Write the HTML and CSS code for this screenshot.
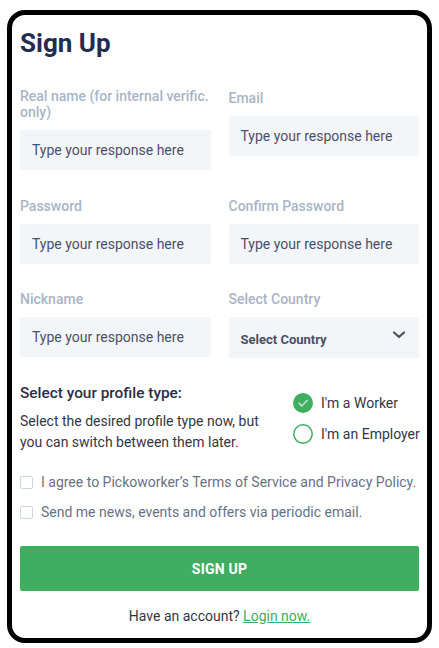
FILE: index.html
```html
<!DOCTYPE html>
<html lang="en">
<head>
<meta charset="utf-8">
<title>Sign Up</title>
<link rel="stylesheet" href="styles.css">
</head>
<body>
<main class="card">
  <h1 class="title">Sign Up</h1>
  <div class="grid">
    <div class="field">
      <label class="label" for="f-name">Real name (for internal verific. only)</label>
      <input class="input" id="f-name" type="text" placeholder="Type your response here">
    </div>
    <div class="field field-offset">
      <label class="label" for="f-email">Email</label>
      <input class="input" id="f-email" type="text" placeholder="Type your response here">
    </div>
    <div class="field">
      <label class="label" for="f-pass">Password</label>
      <input class="input" id="f-pass" type="text" placeholder="Type your response here">
    </div>
    <div class="field">
      <label class="label" for="f-pass2">Confirm Password</label>
      <input class="input" id="f-pass2" type="text" placeholder="Type your response here">
    </div>
    <div class="field">
      <label class="label" for="f-nick">Nickname</label>
      <input class="input" id="f-nick" type="text" placeholder="Type your response here">
    </div>
    <div class="field">
      <label class="label">Select Country</label>
      <div class="select">
        <span class="select-text">Select Country</span>
        <svg class="chevron" width="12" height="8" viewBox="0 0 12 8"><polyline points="1,1.5 6,6 11,1.5" fill="none" stroke="#4b5066" stroke-width="2.2" stroke-linecap="round" stroke-linejoin="round"/></svg>
      </div>
    </div>
  </div>

  <section class="profile">
    <div class="profile-text">
      <h2 class="profile-title">Select your profile type:</h2>
      <p class="profile-desc">Select the desired profile type now, but you can switch between them later.</p>
    </div>
    <div class="radios">
      <div class="radio">
        <svg class="radio-icon" width="20" height="20" viewBox="0 0 20 20"><circle cx="10" cy="10" r="10" fill="#3fae60"/><polyline points="6,10.2 8.8,13 14,7.6" fill="none" stroke="#ffffff" stroke-opacity="0.6" stroke-width="1.8" stroke-linecap="round" stroke-linejoin="round"/></svg>
        <span>I'm a Worker</span>
      </div>
      <div class="radio">
        <svg class="radio-icon" width="20" height="20" viewBox="0 0 20 20"><circle cx="10" cy="10" r="9.2" fill="#fff" stroke="#3fae60" stroke-width="1.5"/></svg>
        <span>I'm an Employer</span>
      </div>
    </div>
  </section>

  <div class="checks">
    <div class="check"><span class="box"></span><span>I agree to Pickoworker’s Terms of Service and Privacy Policy.</span></div>
    <div class="check"><span class="box"></span><span>Send me news, events and offers via periodic email.</span></div>
  </div>

  <button class="btn" type="button">SIGN UP</button>
  <p class="footer">Have an account? <a class="link" href="#">Login now.</a></p>
</main>
</body>
</html>
```
FILE: styles.css
```css
* { box-sizing: border-box; }
body {
  margin: 0;
  background: #fff;
  font-family: Roboto, "Liberation Sans", sans-serif;
}
.card {
  width: 425px;
  height: 633px;
  margin: 10px 0 0 7px;
  border: 5px solid #000;
  border-radius: 18px;
  padding: 13px 8px 0 8px;
  background: #fff;
}
.title {
  margin: 0 0 30px;
  font-size: 26px;
  line-height: 30px;
  font-weight: 700;
  color: #232d52;
}
.grid {
  display: grid;
  grid-template-columns: minmax(0, 1fr) minmax(0, 1fr);
  column-gap: 18px;
  row-gap: 27.5px;
  align-items: start;
}
.field { display: flex; flex-direction: column; min-width: 0; }
.field-offset { padding-top: 2px; }
.label {
  font-size: 14px;
  line-height: 16px;
  font-weight: 500;
  color: #a9b5c7;
  margin-bottom: 10px;
}
.input {
  width: 100%;
  min-width: 0;
  height: 40px;
  border: none;
  border-radius: 2px;
  background: #f3f6f9;
  padding: 0 12px;
  font-family: Roboto, "Liberation Sans", sans-serif;
  font-size: 14px;
  color: #4b5068;
  outline: none;
}
.input::placeholder { color: #4b5068; opacity: 1; }
.select {
  height: 41px;
  border-radius: 2px;
  background: #f3f6f9;
  padding: 0 14px 0 12px;
  display: flex;
  align-items: center;
  justify-content: space-between;
}
.select-text {
  font-size: 13px;
  font-weight: 700;
  color: #4b5066;
  padding-top: 3px;
}
.chevron { margin-bottom: 6px; }
.profile {
  margin-top: 25px;
  display: flex;
  align-items: flex-start;
  justify-content: space-between;
}
.profile-text { max-width: 262px; }
.profile-title {
  margin: 0;
  font-size: 15.4px;
  line-height: 20px;
  font-weight: 500;
  color: #2b2e45;
}
.profile-desc {
  margin: 8px 0 0;
  font-size: 14px;
  line-height: 21px;
  color: #333740;
}
.radios {
  width: 126px;
  margin-top: 10px;
  display: flex;
  flex-direction: column;
  gap: 11px;
}
.radio {
  display: flex;
  align-items: center;
  gap: 8px;
  height: 20px;
  font-size: 14px;
  color: #333740;
  white-space: nowrap;
}
.radio-icon { flex: none; }
.checks {
  margin-top: 19px;
  display: flex;
  flex-direction: column;
  gap: 10px;
}
.check {
  display: flex;
  align-items: center;
  gap: 8px;
  height: 20px;
  font-size: 14px;
  color: #687186;
  white-space: nowrap;
}
.box {
  flex: none;
  width: 13px;
  height: 13px;
  border: 1.5px solid #cbd6e1;
  border-radius: 2px;
  background: #fff;
}
.btn {
  display: block;
  width: 100%;
  height: 45px;
  margin-top: 24px;
  border: none;
  border-radius: 2px;
  background: #3fae60;
  color: #fff;
  font-family: Roboto, "Liberation Sans", sans-serif;
  font-size: 14px;
  font-weight: 700;
  letter-spacing: 0.2px;
}
.footer {
  margin: 15px 0 0;
  text-align: center;
  font-size: 14px;
  line-height: 20px;
  color: #333740;
}
.link { color: #3fae60; text-decoration: underline; }
```
